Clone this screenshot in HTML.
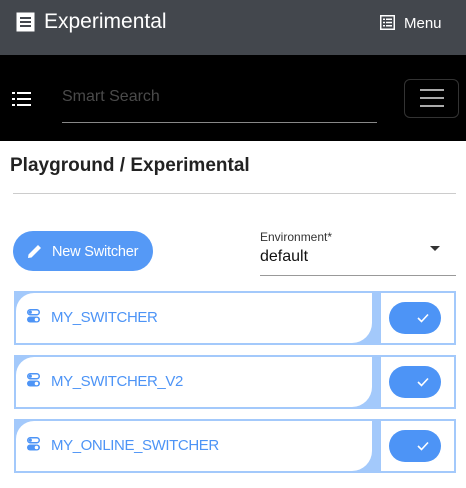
<!DOCTYPE html>
<html><head><meta charset="utf-8"><style>
*{margin:0;padding:0;box-sizing:border-box}
body{width:466px;height:488px;background:#fff;font-family:"Liberation Sans",sans-serif;position:relative;overflow:hidden}
.hdr{position:absolute;left:0;top:0;width:466px;height:55px;background:#43474d;color:#fff}
.bar{position:absolute;left:0;top:55px;width:466px;height:86px;background:#000}
.abs{position:absolute}
.card{position:absolute;left:14px;width:442px;height:54px;border:2px solid #a3c9fb;background:#a3c9fb}
.card .l{position:absolute;left:0;top:0;width:356px;height:50px;background:#fff;border-top-left-radius:18px;border-bottom-right-radius:20px}
.card .r{position:absolute;left:365px;top:0;width:73px;height:50px;background:#fff}
.card .t{position:absolute;left:35px;top:16px;font-size:15px;color:#4d94f6;letter-spacing:-0.4px}
.card .ic{position:absolute;left:11px;top:16px}
.pill{position:absolute;left:8px;top:9px;width:52px;height:32px;border-radius:16px;background:#4d94f6}
</style></head><body>
<div class="hdr">
  <svg class="abs" style="left:16px;top:12px" width="19" height="20" viewBox="0 0 19 20"><rect x="0.5" y="0.5" width="18" height="19" fill="#fff"/><rect x="4" y="5" width="11" height="2" fill="#43474d"/><rect x="4" y="9" width="11" height="2" fill="#43474d"/><rect x="4" y="13" width="11" height="2" fill="#43474d"/></svg>
  <div class="abs" style="left:44px;top:10px;font-size:21px">Experimental</div>
  <svg class="abs" style="left:380px;top:15px" width="15" height="15" viewBox="0 0 15 15"><rect x="0.75" y="0.75" width="13.5" height="13.5" fill="none" stroke="#fff" stroke-width="1.5"/><rect x="3" y="3.5" width="2" height="1.5" fill="#fff"/><rect x="6" y="3.5" width="6" height="1.5" fill="#fff"/><rect x="3" y="6.75" width="2" height="1.5" fill="#fff"/><rect x="6" y="6.75" width="6" height="1.5" fill="#fff"/><rect x="3" y="10" width="2" height="1.5" fill="#fff"/><rect x="6" y="10" width="6" height="1.5" fill="#fff"/></svg>
  <div class="abs" style="left:404px;top:15px;font-size:15px">Menu</div>
</div>
<div class="bar">
  <svg class="abs" style="left:12px;top:37px" width="20" height="14" viewBox="0 0 20 14"><g fill="#fff"><rect x="0" y="0" width="3" height="2"/><rect x="5" y="0" width="14" height="2"/><rect x="0" y="6" width="3" height="2"/><rect x="5" y="6" width="14" height="2"/><rect x="0" y="12" width="3" height="2"/><rect x="5" y="12" width="14" height="2"/></g></svg>
  <div class="abs" style="left:62px;top:33px;font-size:16px;color:#4a4a4a">Smart Search</div>
  <div class="abs" style="left:62px;top:67px;width:315px;height:1px;background:#888"></div>
  <div class="abs" style="left:404px;top:24px;width:55px;height:39px;border:1px solid #333;border-radius:6px"></div>
  <div class="abs" style="left:420px;top:34px;width:24px;height:2px;background:#aaa"></div>
  <div class="abs" style="left:420px;top:42px;width:24px;height:2px;background:#aaa"></div>
  <div class="abs" style="left:420px;top:50px;width:24px;height:2px;background:#aaa"></div>
</div>
<div class="abs" style="left:10px;top:155px;font-size:19px;font-weight:bold;color:#222">Playground / Experimental</div>
<div class="abs" style="left:13px;top:193px;width:443px;height:1px;background:#ccc"></div>
<div class="abs" style="left:13px;top:231px;width:140px;height:40px;border-radius:20px;background:#5599f6"></div>
<svg class="abs" style="left:27px;top:243px" width="16" height="16" viewBox="0 0 16 16"><path d="M1 15 L1.5 11.5 L11 2 L14 5 L4.5 14.5 Z" fill="#fff"/></svg>
<div class="abs" style="left:52px;top:244px;font-size:14.5px;color:#fff;letter-spacing:-0.2px">New Switcher</div>
<div class="abs" style="left:260px;top:230px;font-size:12px;color:#333">Environment*</div>
<div class="abs" style="left:260px;top:248px;font-size:16px;color:#111">default</div>
<div class="abs" style="left:430px;top:246px;width:0;height:0;border-left:5px solid transparent;border-right:5px solid transparent;border-top:5px solid #333"></div>
<div class="abs" style="left:260px;top:275px;width:196px;height:1px;background:#999"></div>

<div class="card" style="top:291px"><div class="l"><svg class="ic" width="13" height="14" viewBox="0 0 13 14"><rect x="0.75" y="0.75" width="11.5" height="5" rx="2.5" fill="none" stroke="#4d94f6" stroke-width="1.5"/><rect x="0" y="7.5" width="13" height="6" rx="3" fill="#4d94f6"/><circle cx="3.3" cy="3.25" r="1.6" fill="#4d94f6"/><circle cx="9.5" cy="10.5" r="1.8" fill="#fff"/></svg><div class="t">MY_SWITCHER</div></div><div class="r"><div class="pill"><svg class="abs" style="left:28px;top:11px" width="12" height="10" viewBox="0 0 12 10"><path d="M1 5 L4.5 8.5 L11 1.5" fill="none" stroke="#fff" stroke-width="1.6"/></svg></div></div></div>

<div class="card" style="top:355px"><div class="l"><svg class="ic" width="13" height="14" viewBox="0 0 13 14"><rect x="0.75" y="0.75" width="11.5" height="5" rx="2.5" fill="none" stroke="#4d94f6" stroke-width="1.5"/><rect x="0" y="7.5" width="13" height="6" rx="3" fill="#4d94f6"/><circle cx="3.3" cy="3.25" r="1.6" fill="#4d94f6"/><circle cx="9.5" cy="10.5" r="1.8" fill="#fff"/></svg><div class="t">MY_SWITCHER_V2</div></div><div class="r"><div class="pill"><svg class="abs" style="left:28px;top:11px" width="12" height="10" viewBox="0 0 12 10"><path d="M1 5 L4.5 8.5 L11 1.5" fill="none" stroke="#fff" stroke-width="1.6"/></svg></div></div></div>

<div class="card" style="top:419px"><div class="l"><svg class="ic" width="13" height="14" viewBox="0 0 13 14"><rect x="0.75" y="0.75" width="11.5" height="5" rx="2.5" fill="none" stroke="#4d94f6" stroke-width="1.5"/><rect x="0" y="7.5" width="13" height="6" rx="3" fill="#4d94f6"/><circle cx="3.3" cy="3.25" r="1.6" fill="#4d94f6"/><circle cx="9.5" cy="10.5" r="1.8" fill="#fff"/></svg><div class="t">MY_ONLINE_SWITCHER</div></div><div class="r"><div class="pill"><svg class="abs" style="left:28px;top:11px" width="12" height="10" viewBox="0 0 12 10"><path d="M1 5 L4.5 8.5 L11 1.5" fill="none" stroke="#fff" stroke-width="1.6"/></svg></div></div></div>
</body></html>
